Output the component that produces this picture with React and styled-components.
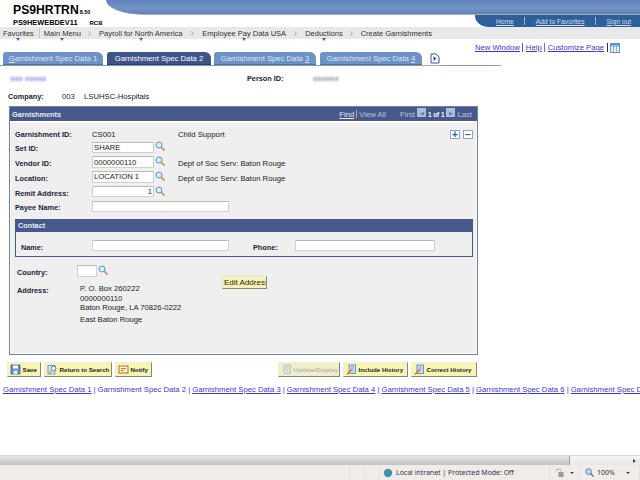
import styled, { createGlobalStyle } from "styled-components";
import { ChevronRight } from "lucide-react";

const GlobalStyle = createGlobalStyle`
  html, body {
    margin: 0;
    padding: 0;
    background: white;
    overflow: hidden;
  }
  * {
    box-sizing: border-box;
  }
`;

const Page = styled.div`
  width: 640px;
  height: 480px;
  display: flex;
  flex-direction: column;
  overflow: hidden;
  font-family: "Liberation Sans", Arial, sans-serif;
  font-size: 7.7px;
  color: #222;
`;

const Banner = styled.div`
  height: 27px;
  display: flex;
  flex-shrink: 0;
`;

const Brand = styled.div`
  width: 106px;
  padding: 4px 0 0 13px;
  color: #000;
`;

const BrandTitle = styled.div`
  font-size: 12.2px;
  line-height: 12px;
  font-weight: bold;
  white-space: nowrap;
  small {
    font-size: 5.5px;
    margin-left: 1px;
  }
`;

const BrandSub = styled.div`
  margin-top: 1px;
  font-size: 7.4px;
  line-height: 8px;
  font-weight: bold;
  display: flex;
  gap: 12px;
  white-space: nowrap;
  small {
    font-size: 6px;
  }
`;

const BannerRight = styled.div`
  flex: 1;
  display: flex;
  flex-direction: column;
`;

const BlueBand = styled.div`
  height: 15px;
  background: linear-gradient(#5f83bb, #7394c8 60%, #5f80b6);
  border-bottom: 1px solid #a9a9ad;
  border-bottom-left-radius: 38px 15px;
`;

const UserBar = styled.div`
  height: 12px;
  width: 165px;
  margin-left: auto;
  background: #2f5f9b;
  border-bottom-left-radius: 14px 11px;
  display: flex;
  align-items: center;
  padding-left: 21px;
`;

const UserLink = styled.a`
  font-size: 6.7px;
  color: #cfdff2;
  text-decoration: underline;
  white-space: nowrap;
`;

const UserSep = styled.span`
  width: 1px;
  height: 8px;
  background: #9fb6d6;
  margin: 0 11px 0 10px;
`;

const NavBar = styled.nav`
  height: 12px;
  flex-shrink: 0;
  background: #e8e8e8;
  display: flex;
  align-items: center;
  padding-left: 3px;
  font-size: 7.5px;
  color: #333;
  white-space: nowrap;
`;

const NavItem = styled.span`
  position: relative;
  margin-right: ${(p) => p.$gap || 0}px;
  &::after {
    content: ${(p) => (p.$menu ? '""' : "none")};
    position: absolute;
    left: 50%;
    bottom: -3px;
    margin-left: -2px;
    border-left: 2px solid transparent;
    border-right: 2px solid transparent;
    border-top: 3px solid #2f6cb0;
  }
`;

const NavDivider = styled.span`
  width: 1px;
  height: 10px;
  background: #c4c4c4;
  margin-right: 4px;
`;

const NavArrow = styled(ChevronRight)`
  width: 7px;
  height: 7px;
  color: #777;
  margin-right: 6px;
`;

const PageLinks = styled.div`
  height: 13px;
  flex-shrink: 0;
  padding: 4px 0 0 475px;
  display: flex;
  align-items: center;
  white-space: nowrap;
`;

const PageLink = styled.a`
  color: #3a3ac8;
  text-decoration: underline;
`;

const PageLinkSep = styled.span`
  width: 1px;
  height: 9px;
  background: ${(p) => p.$color};
  margin: 0 2.5px;
`;

const TabStrip = styled.div`
  height: 14px;
  flex-shrink: 0;
  width: 501px;
  padding: 0 0 1px 3px;
  display: flex;
  align-items: flex-end;
  background: linear-gradient(to right, #7f9dc4 421px, #aaa 421px, #aaa 440px, #7f9dc4 440px) bottom / 100% 1px no-repeat;
`;

const Tab = styled.div`
  width: ${(p) => p.$width}px;
  margin-right: ${(p) => p.$gap}px;
  height: 13px;
  background: ${(p) => (p.$active ? "#3f5387" : "#6d92c6")};
  color: ${(p) => (p.$active ? "#fff" : "#dfe7f3")};
  border-radius: 3px 6px 0 0;
  border-bottom: 1px solid ${(p) => (p.$active ? "#2c3a66" : "#5c6f8e")};
  display: flex;
  align-items: center;
  justify-content: center;
  white-space: nowrap;
`;

const TabNext = styled.svg`
  width: 10px;
  height: 11px;
  margin: 0 0 1px 8px;
`;

const PersonRow = styled.div`
  height: 24px;
  flex-shrink: 0;
  padding: 1px 0 0 10px;
  display: flex;
  align-items: center;
`;

const Blurred = styled.span`
  color: ${(p) => p.$color};
  filter: blur(1.3px);
  width: ${(p) => p.$width}px;
  margin-right: ${(p) => p.$gap || 0}px;
  font-weight: bold;
  white-space: nowrap;
  overflow: hidden;
`;

const CompanyRow = styled.div`
  height: 12px;
  flex-shrink: 0;
  padding-left: 8px;
  display: flex;
  align-items: center;
`;

const StrongLabel = styled.span`
  font-size: 7.3px;
  font-weight: bold;
  color: #1c2438;
  width: ${(p) => p.$width}px;
  flex-shrink: 0;
  white-space: nowrap;
`;

const Text = styled.span`
  width: ${(p) => (p.$width ? `${p.$width}px` : "auto")};
  padding-top: ${(p) => (p.$low ? 3 : 0)}px;
  flex-shrink: 0;
  white-space: nowrap;
`;

const Panel = styled.section`
  margin: 4px 0 0 9px;
  width: 469px;
  height: 249px;
  flex-shrink: 0;
  border: 1px solid #7381a6;
  background: #efefef;
  display: flex;
  flex-direction: column;
`;

const PanelHeader = styled.div`
  height: 15px;
  flex-shrink: 0;
  background: #46598a;
  color: #e8ecf4;
  border-bottom: 1px solid #fff;
  display: flex;
  align-items: center;
  padding: 0 5px 0 2px;
  white-space: nowrap;
`;

const PanelTitle = styled.span`
  font-size: 7.3px;
  font-weight: bold;
  margin-right: auto;
`;

const HeaderLink = styled.a`
  color: #e6eaf3;
  text-decoration: underline;
`;

const HeaderSep = styled.span`
  width: 1px;
  height: 8px;
  background: #d0a0a0;
  margin: 0 2px;
`;

const HeaderMuted = styled.span`
  color: #bcc6da;
  margin-right: ${(p) => p.$gap || 0}px;
`;

const PagerButton = styled.span`
  width: 9px;
  height: 9px;
  margin: -3px 2px 0;
  background: #a9bfdc;
  color: #5c7dae;
  font-size: 5px;
  display: flex;
  align-items: center;
  justify-content: center;
`;

const PagerCount = styled.span`
  font-size: 6.3px;
  font-weight: bold;
  color: #fff;
`;

const PanelBody = styled.div`
  flex: 1;
  padding: 6px 5px 0 5px;
  display: flex;
  flex-direction: column;
  box-shadow: inset 0 0 0 1px #f9f9f9;
`;

const FormRow = styled.div`
  height: ${(p) => p.$height || 14.75}px;
  display: flex;
  align-items: center;
  flex-shrink: 0;
`;

const FieldLabel = styled.span`
  width: 77px;
  flex-shrink: 0;
  font-size: 7.3px;
  font-weight: bold;
  color: #1c2438;
  white-space: nowrap;
  padding-top: ${(p) => (p.$low ? 3 : 0)}px;
`;

const Input = styled.input`
  width: ${(p) => p.$width}px;
  height: 11.5px;
  padding: 0 1px;
  border: 1px solid #cfd1cb;
  border-top-color: #b9bbb5;
  background: #fff;
  color: #222;
  font: 7.7px "Liberation Sans", Arial, sans-serif;
  text-align: ${(p) => (p.$right ? "right" : "left")};
  flex-shrink: 0;
  outline: none;
`;

const LookupIcon = styled.svg`
  width: 10px;
  height: 10px;
  flex-shrink: 0;
  margin: -2px ${(p) => p.$gap || 0}px 0 1px;
`;

const Expanders = styled.div`
  margin-left: auto;
  margin-right: -1px;
  display: flex;
  gap: 3px;
`;

const Expander = styled.span`
  width: 10px;
  height: 9px;
  background: #fff;
  border: 1px solid #8ea5bf;
  color: #1f5aa8;
  font-size: 10px;
  line-height: 7px;
  font-weight: bold;
  text-align: center;
`;

const ContactBox = styled.div`
  margin-top: 5px;
  width: 458px;
  height: 38px;
  flex-shrink: 0;
  border: 1px solid #46598a;
  border-top: 0;
`;

const ContactHeader = styled.div`
  height: 13.5px;
  background: #46598a;
  color: #e8ecf4;
  font-size: 7.3px;
  font-weight: bold;
  display: flex;
  align-items: center;
  padding-left: 2px;
`;

const ContactRow = styled.div`
  margin-top: 7.5px;
  padding-left: 5px;
  display: flex;
  align-items: flex-start;
`;

const ContactLabel = styled.span`
  width: ${(p) => p.$width}px;
  flex-shrink: 0;
  font-size: 7.3px;
  font-weight: bold;
  color: #1c2438;
  padding-top: 3px;
`;

const LowerSection = styled.div`
  margin-top: 8px;
  padding-left: 2px;
`;

const AddressRow = styled.div`
  display: flex;
  align-items: flex-start;
  margin-top: 7px;
`;

const AddressLabel = styled.span`
  width: ${(p) => p.$width}px;
  flex-shrink: 0;
  font-size: 7.3px;
  font-weight: bold;
  color: #1c2438;
  padding-top: ${(p) => p.$top}px;
`;

const AddressLines = styled.div`
  width: 142px;
  flex-shrink: 0;
  line-height: 9.75px;
`;

const AddressLine = styled.div`
  margin-top: ${(p) => p.$gap || 0}px;
  white-space: nowrap;
`;

const EditAddress = styled.button`
  width: 45px;
  height: 13.5px;
  margin-top: -8px;
  padding: 0 0 0 1px;
  background: #f8f5b4;
  border: 1px solid;
  border-color: #e4e4d8 #8a8a80 #8a8a80 #e4e4d8;
  color: #222;
  font: 8px "Liberation Sans", Arial, sans-serif;
  text-align: left;
  white-space: nowrap;
  overflow: hidden;
`;

const ActionBar = styled.div`
  margin-top: 7px;
  height: 15px;
  flex-shrink: 0;
  padding-left: 7px;
  display: flex;
  gap: 3px;
`;

const ActionButton = styled.button`
  width: ${(p) => p.$width}px;
  height: 15px;
  margin-left: ${(p) => p.$push || 0}px;
  padding: 0 0 0 2px;
  background: ${(p) => (p.$off ? "#f0eecb" : "#f8f5b4")};
  border: 1px solid;
  border-color: #ececdf #85857c #85857c #ececdf;
  color: ${(p) => (p.$off ? "#b8b8a8" : "#1c1c1c")};
  font: bold 6.2px "Liberation Sans", Arial, sans-serif;
  display: flex;
  align-items: center;
  gap: 1.5px;
  white-space: nowrap;
  overflow: hidden;
`;

const ButtonIcon = styled.svg`
  width: 11px;
  height: 11px;
  flex-shrink: 0;
  opacity: ${(p) => (p.$off ? 0.45 : 1)};
`;

const BottomLinks = styled.div`
  margin-top: 7px;
  padding-left: 3px;
  height: 11px;
  flex-shrink: 0;
  white-space: nowrap;
  color: #3a3ac8;
  display: flex;
  gap: 2px;
  align-items: center;
`;

const Spacer = styled.div`
  flex: 1;
`;

const ScrollBar = styled.div`
  height: 10px;
  flex-shrink: 0;
  background: linear-gradient(#f6f6f6, #e7e7e7);
  border-top: 1px solid #d6d6d6;
  display: flex;
  align-items: center;
`;

const ScrollThumb = styled.div`
  width: 570px;
  height: 100%;
  background: linear-gradient(#e8e8e8, #cfcfcf 55%, #c2c2c2);
  border-right: 1px solid #a4a4a4;
`;

const ScrollArrow = styled.span`
  margin-left: auto;
  margin-right: 4px;
  border-left: 3px solid #444;
  border-top: 2px solid transparent;
  border-bottom: 2px solid transparent;
`;

const StatusBar = styled.div`
  height: 15px;
  flex-shrink: 0;
  background: #f2ece9;
  display: flex;
  align-items: center;
  font: 6.95px "Noto Sans", "Liberation Sans", sans-serif;
  color: #26334d;
  white-space: nowrap;
`;

const StatusCell = styled.div`
  width: ${(p) => p.$width}px;
  height: 100%;
  flex-shrink: 0;
  border-right: 1px solid #e6e0dc;
  display: flex;
  align-items: center;
  gap: 3px;
  padding-left: ${(p) => p.$pad || 0}px;
`;

const DropCaret = styled.span`
  margin-left: ${(p) => p.$gap}px;
  border-top: 2px solid #444;
  border-left: 2px solid transparent;
  border-right: 2px solid transparent;
`;

const Lookup = ({ gap }) => (
  <LookupIcon $gap={gap} viewBox="0 0 10 10">
    <line x1="5.8" y1="5.8" x2="9" y2="9" stroke="#d09a62" strokeWidth="1.8" strokeLinecap="round" />
    <circle cx="4" cy="4" r="3" fill="#dcecf9" stroke="#5b94c8" strokeWidth="1" />
  </LookupIcon>
);

const DocIcon = ({ off, pencil }) => (
  <ButtonIcon $off={off} viewBox="0 0 11 11">
    <rect x="3" y="1" width="6.5" height="8.5" fill="#dbe8f7" stroke="#4a78b5" strokeWidth="0.8" />
    <path d="M4.5 3h3.5M4.5 5h3.5M4.5 7h3" stroke="#4a78b5" strokeWidth="0.7" />
    {pencil && <path d="M1 10.5L5.5 5.5" stroke="#d8772a" strokeWidth="1.6" />}
  </ButtonIcon>
);

const linkNames = [1, 2, 3, 4, 5, 6, 7];

export default function App() {
  return (
    <Page>
      <GlobalStyle />
      <Banner>
        <Brand>
          <BrandTitle>
            PS9HRTRN<small>8.50</small>
          </BrandTitle>
          <BrandSub>
            <span>PS9HEWEBDEV11</span>
            <small>RCB</small>
          </BrandSub>
        </Brand>
        <BannerRight>
          <BlueBand />
          <UserBar>
            <UserLink>Home</UserLink>
            <UserSep />
            <UserLink>Add to Favorites</UserLink>
            <UserSep />
            <UserLink>Sign out</UserLink>
          </UserBar>
        </BannerRight>
      </Banner>

      <NavBar>
        <NavItem $menu $gap={5}>Favorites</NavItem>
        <NavDivider />
        <NavItem $menu $gap={5}>Main Menu</NavItem>
        <NavArrow />
        <NavItem $menu $gap={7}>Payroll for North America</NavItem>
        <NavArrow />
        <NavItem $menu $gap={6}>Employee Pay Data USA</NavItem>
        <NavArrow />
        <NavItem $menu $gap={5}>Deductions</NavItem>
        <NavArrow />
        <NavItem>Create Garnishments</NavItem>
      </NavBar>

      <PageLinks>
        <PageLink>New Window</PageLink>
        <PageLinkSep $color="#a05050" />
        <PageLink>Help</PageLink>
        <PageLinkSep $color="#5a7fb5" />
        <PageLink>Customize Page</PageLink>
        <PageLinkSep $color="#333" />
        <svg width="10" height="10" viewBox="0 0 10 10">
          <rect x="0.5" y="0.5" width="9" height="9" fill="#e6f0fa" stroke="#5f93c9" />
          <path d="M0.5 3h9M3.5 3v6.5M6.5 3v6.5" stroke="#5f93c9" strokeWidth="0.7" />
          <rect x="0.5" y="0.5" width="9" height="2" fill="#5f93c9" />
        </svg>
      </PageLinks>

      <TabStrip>
        <Tab $width={100} $gap={4}><span><u>G</u>arnishment Spec Data 1</span></Tab>
        <Tab $width={104} $gap={3} $active>Garnishment Spec Data 2</Tab>
        <Tab $width={102} $gap={4}><span>Garnishment Spec Data <u>3</u></span></Tab>
        <Tab $width={102} $gap={0}><span>Garnishment Spec Data <u>4</u></span></Tab>
        <TabNext viewBox="0 0 10 11">
          <path d="M1 1h5l3 3v6H1z" fill="#fff" stroke="#3f5387" />
          <path d="M3.5 3l3 2.5-3 2.5z" fill="#3f5387" />
        </TabNext>
      </TabStrip>

      <PersonRow>
        <Blurred $color="#7a7ae0" $width={38} $gap={199}>xxx xxxxx</Blurred>
        <StrongLabel $width={66}>Person ID:</StrongLabel>
        <Blurred $color="#808080" $width={32}>xxxxxx</Blurred>
      </PersonRow>

      <CompanyRow>
        <StrongLabel $width={54}>Company:</StrongLabel>
        <Text $width={22}>003</Text>
        <Text>LSUHSC-Hospitals</Text>
      </CompanyRow>

      <Panel>
        <PanelHeader>
          <PanelTitle>Garnishments</PanelTitle>
          <HeaderLink>Find</HeaderLink>
          <HeaderSep />
          <HeaderMuted $gap={14}>View All</HeaderMuted>
          <HeaderMuted>First</HeaderMuted>
          <PagerButton>◀</PagerButton>
          <PagerCount>1 of 1</PagerCount>
          <PagerButton>▶</PagerButton>
          <HeaderMuted>Last</HeaderMuted>
        </PanelHeader>
        <PanelBody>
          <FormRow $height={12}>
            <FieldLabel>Garnishment ID:</FieldLabel>
            <Text $width={86}>CS001</Text>
            <Text>Child Support</Text>
            <Expanders>
              <Expander>+</Expander>
              <Expander>−</Expander>
            </Expanders>
          </FormRow>
          <FormRow>
            <FieldLabel $low>Set ID:</FieldLabel>
            <Input $width={62} defaultValue="SHARE" />
            <Lookup />
          </FormRow>
          <FormRow>
            <FieldLabel $low>Vendor ID:</FieldLabel>
            <Input $width={62} defaultValue="0000000110" />
            <Lookup gap={13} />
            <Text $low>Dept of Soc Serv: Baton Rouge</Text>
          </FormRow>
          <FormRow>
            <FieldLabel $low>Location:</FieldLabel>
            <Input $width={62} defaultValue="LOCATION 1" />
            <Lookup gap={13} />
            <Text $low>Dept of Soc Serv: Baton Rouge</Text>
          </FormRow>
          <FormRow>
            <FieldLabel $low>Remit Address:</FieldLabel>
            <Input $width={62} $right defaultValue="1" />
            <Lookup />
          </FormRow>
          <FormRow>
            <FieldLabel $low>Payee Name:</FieldLabel>
            <Input $width={137} />
          </FormRow>

          <ContactBox>
            <ContactHeader>Contact</ContactHeader>
            <ContactRow>
              <ContactLabel $width={71}>Name:</ContactLabel>
              <Input $width={137} />
              <Text $width={24} />
              <ContactLabel $width={42}>Phone:</ContactLabel>
              <Input $width={140} />
            </ContactRow>
          </ContactBox>

          <LowerSection>
            <FormRow $height={12}>
              <AddressLabel $width={60} $top={3}>Country:</AddressLabel>
              <Input $width={20} />
              <Lookup />
            </FormRow>
            <AddressRow>
              <AddressLabel $width={63} $top={2}>Address:</AddressLabel>
              <AddressLines>
                <AddressLine>P. O. Box 260222</AddressLine>
                <AddressLine>0000000110</AddressLine>
                <AddressLine>Baton Rouge, LA 70826-0222</AddressLine>
                <AddressLine $gap={2}>East Baton Rouge</AddressLine>
              </AddressLines>
              <EditAddress>Edit Address</EditAddress>
            </AddressRow>
          </LowerSection>
        </PanelBody>
      </Panel>

      <ActionBar>
        <ActionButton $width={34}>
          <ButtonIcon viewBox="0 0 11 11">
            <rect x="1" y="1" width="9" height="9" fill="#5f8fd0" stroke="#2f5a9c" strokeWidth="0.7" />
            <rect x="3" y="1.5" width="5" height="3" fill="#fff" />
            <rect x="3.5" y="6.5" width="4" height="3.5" fill="#dfe8f4" />
          </ButtonIcon>
          Save
        </ActionButton>
        <ActionButton $width={68}>
          <ButtonIcon viewBox="0 0 11 11">
            <rect x="1" y="1.5" width="7" height="8.5" fill="#dbe8f7" stroke="#5a86bd" strokeWidth="0.8" />
            <circle cx="6.5" cy="4.5" r="2.4" fill="#f4f8fc" stroke="#3f7fbe" strokeWidth="0.9" />
            <path d="M2 9.5L4.8 6.3" stroke="#d0983c" strokeWidth="1.3" />
          </ButtonIcon>
          Return to Search
        </ActionButton>
        <ActionButton $width={37}>
          <ButtonIcon viewBox="0 0 11 11">
            <rect x="1" y="2" width="9" height="7" fill="#fdf7d0" stroke="#a2621e" strokeWidth="0.9" />
            <path d="M3 4.5h5M3 6.5h3" stroke="#a2621e" strokeWidth="0.8" />
          </ButtonIcon>
          Notify
        </ActionButton>
        <ActionButton $width={62} $push={123} $off>
          <DocIcon off />
          Update/Display
        </ActionButton>
        <ActionButton $width={65}>
          <DocIcon pencil />
          Include History
        </ActionButton>
        <ActionButton $width={66}>
          <DocIcon pencil />
          Correct History
        </ActionButton>
      </ActionBar>

      <BottomLinks>
        {linkNames.map((n) => (
          <Text key={n}>
            {n === 2 ? <span>Garnishment Spec Data 2</span> : <PageLink>Garnishment Spec Data {n}</PageLink>}
            {n < 7 && " | "}
          </Text>
        ))}
      </BottomLinks>

      <Spacer />

      <ScrollBar>
        <ScrollThumb />
        <ScrollArrow />
      </ScrollBar>
      <StatusBar>
        <StatusCell $width={350} />
        <StatusCell $width={15} />
        <StatusCell $width={15} />
        <StatusCell $width={170} $pad={3}>
          <svg width="10" height="10" viewBox="0 0 10 10">
            <circle cx="5" cy="5" r="4.2" fill="#3f8fd0" />
            <path d="M2 3.5c2-1 3 0 3 1.5S3.5 8 3 8M6 1.5c1 1 2 2 2 3" stroke="#4c9a3f" strokeWidth="1.3" fill="none" />
          </svg>
          Local intranet | Protected Mode: Off
        </StatusCell>
        <StatusCell $width={30} $pad={5}>
          <svg width="10" height="10" viewBox="0 0 10 10">
            <path d="M1 3.5a2.5 2.5 0 0 1 5 0" stroke="#aaa" fill="none" />
            <rect x="3.5" y="4" width="5" height="5" fill="#999" />
          </svg>
          <DropCaret $gap={2} />
        </StatusCell>
        <StatusCell $width={60} $pad={5}>
          <svg width="9" height="9" viewBox="0 0 10 10">
            <line x1="6" y1="6" x2="9.5" y2="9.5" stroke="#6c6c6c" strokeWidth="1.5" />
            <circle cx="4" cy="4" r="3.2" fill="#bcd7ef" stroke="#3f7fbe" />
          </svg>
          100%
          <DropCaret $gap={8} />
        </StatusCell>
      </StatusBar>
    </Page>
  );
}
